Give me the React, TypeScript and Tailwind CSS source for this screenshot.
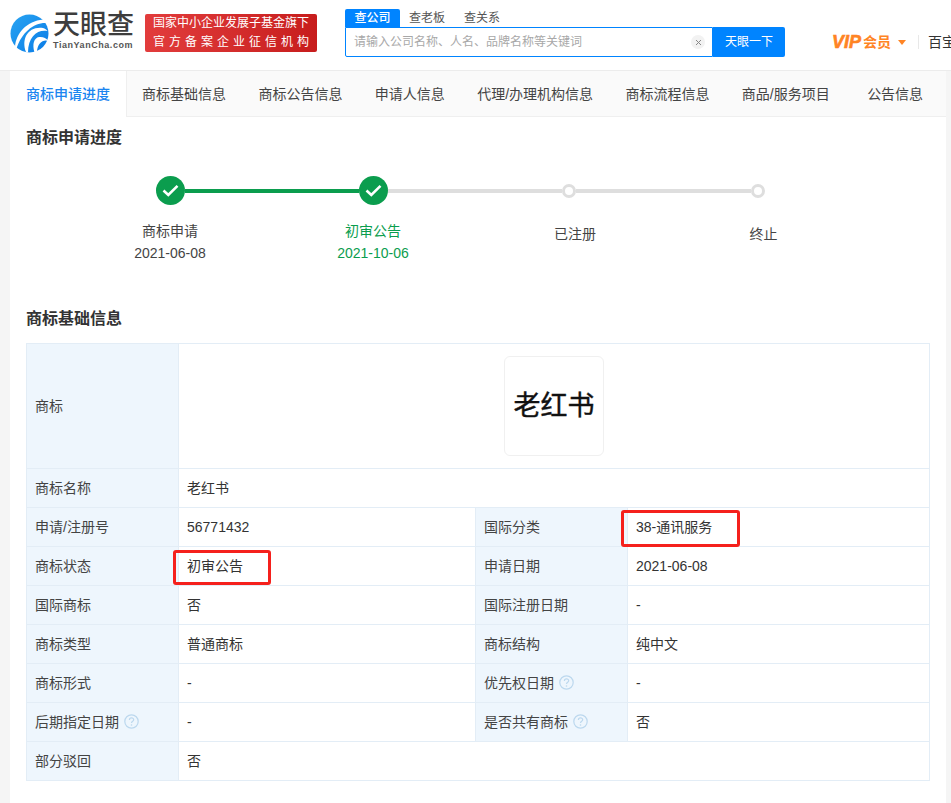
import React from "react";

const FONT = "font-['Liberation_Sans','Noto_Sans_CJK_SC',sans-serif]";

function Logo() {
  return (
    <svg width="39" height="39" viewBox="0 0 39 39" className="shrink-0">
      <defs>
        <linearGradient id="lg" x1="0" y1="0" x2="1" y2="1">
          <stop offset="0" stopColor="#28a4f2" />
          <stop offset="1" stopColor="#0a7be6" />
        </linearGradient>
      </defs>
      <circle cx="19.5" cy="19.5" r="19" fill="url(#lg)" />
      <path d="M5 33 C6 19 17 7 33 5.5 C35 6.5 36 7.5 37 9 C24 8 12 18 6.5 34.5 Z" fill="#fff" />
      <path d="M16 38 C11 25 18 12 33 14 C35 14.5 36.5 15.5 37.5 17 C28 15 18 22 18 38.5 Z" fill="#fff" />
      <path d="M24.5 38.5 C22 30 24 24 29 23 C33 22.5 36 24 38.5 27 C33 25 27.5 29 27 37.8 Z" fill="#fff" />
    </svg>
  );
}

function Check() {
  return (
    <div className="w-[29px] h-[29px] rounded-full bg-[#0b9d4e] flex items-center justify-center shrink-0">
      <svg width="17" height="13" viewBox="0 0 17 13" fill="none">
        <path d="M1.5 6.5 L6.3 11 L15.5 1.8" stroke="#fff" strokeWidth="2.6" />
      </svg>
    </div>
  );
}

function Dot() {
  return <div className="w-[14px] h-[14px] rounded-full bg-white border-[3px] border-[#dedede] shrink-0" />;
}

function Help() {
  return (
    <svg width="15" height="15" viewBox="0 0 15 15" className="inline-block ml-[5px] align-[-2px]" fill="none">
      <circle cx="7.5" cy="7.5" r="6.7" stroke="#bcd8ee" strokeWidth="1.2" />
      <path d="M5.4 5.9 C5.4 3.3 9.7 3.3 9.7 5.8 C9.7 7.4 7.5 7.3 7.5 9.1" stroke="#bcd8ee" strokeWidth="1.2" />
      <circle cx="7.5" cy="11" r="0.8" fill="#bcd8ee" />
    </svg>
  );
}

const tabs = ["商标基础信息", "商标公告信息", "申请人信息", "代理/办理机构信息", "商标流程信息", "商品/服务项目"];

const L = "bg-[#eef6fd] border border-[#e3edf6] pl-2 pr-1 h-[39px] text-[#444] font-normal text-left text-[14px]";
const V = "bg-white border border-[#e3edf6] pl-2 h-[39px] text-[#333] text-[14px]";

export default function App() {
  return (
    <div className={`${FONT} w-[951px] h-[803px] overflow-hidden bg-[#f5f5f5] text-[#333]`}>
      <header className="h-[71px] bg-white border-b border-[#ececec] flex items-start pl-[10px] w-[951px] overflow-hidden">
        <div className="mt-[14px]"><Logo /></div>
        <div className="ml-[4px] mt-[11px] w-[81px] shrink-0">
          <div className="text-[27px] leading-[29px] font-medium text-[#3d3d3d] whitespace-nowrap">天眼查</div>
          <div className="text-[9px] leading-[11px] font-bold text-[#555] tracking-[0.55px] whitespace-nowrap">TianYanCha.com</div>
        </div>
        <div className="ml-[11px] mt-[14px] w-[172px] h-[38px] rounded-[2px] bg-gradient-to-r from-[#e23c3c] to-[#c71c1c] text-white text-[12px] leading-[19px] text-center shrink-0 flex flex-col justify-center">
          <div className="whitespace-nowrap">国家中小企业发展子基金旗下</div>
          <div className="whitespace-nowrap tracking-[4px] pl-[4px]">官方备案企业征信机构</div>
        </div>
        <div className="ml-[28px] mt-[9px] w-[440px] shrink-0">
          <div className="flex h-[18px] text-[12px] leading-[18px] text-[#555]">
            <div className="w-[55px] text-center bg-[#0084ff] text-white font-medium rounded-t-[2px]">查公司</div>
            <div className="ml-[9px] w-[37px]">查老板</div>
            <div className="ml-[18px] w-[37px]">查关系</div>
          </div>
          <div className="flex h-[30px]">
            <div className="w-[368px] border border-[#0084ff] rounded-bl-[2px] flex items-center pl-[8px] pr-[7px]">
              <span className="flex-1 text-[12px] text-[#a8a8a8] whitespace-nowrap">请输入公司名称、人名、品牌名称等关键词</span>
              <span className="w-[14px] h-[14px] rounded-full bg-[#f2f2f2] flex items-center justify-center">
                <svg width="7" height="7" viewBox="0 0 7 7"><path d="M1 1L6 6M6 1L1 6" stroke="#888" strokeWidth="1" /></svg>
              </span>
            </div>
            <div className="w-[72px] bg-[#0084ff] text-white text-[12px] flex items-center justify-center rounded-r-[2px]">天眼一下</div>
          </div>
        </div>
        <div className="ml-[47px] mt-[33px] flex items-center h-[18px] shrink-0 text-[#ff8424]">
          <span className="text-[18px] leading-[18px] font-bold italic [-webkit-text-stroke:0.6px_#ff8424]">VIP</span>
          <span className="ml-[2px] text-[14px] leading-[18px] font-bold">会员</span>
          <span className="ml-[7px] w-0 h-0 border-x-[4px] border-x-transparent border-t-[5px] border-t-[#ff8424]" />
          <span className="ml-[12px] w-px h-[14px] bg-[#e8e8e8]" />
          <span className="ml-[9px] text-[14px] text-[#333] whitespace-nowrap">百宝箱</span>
        </div>
      </header>

      <main className="ml-[10px] w-[936px] h-[732px] bg-white">
        <nav className="h-[45px] flex bg-[#fafafa] border-b border-[#efefef] text-[14px] text-[#444] box-content">
          <div className="w-[117px] bg-white border-r border-[#efefef] text-[#1a85f0] font-medium pl-[16px] leading-[46px] -mb-px whitespace-nowrap">商标申请进度</div>
          <div className="flex gap-[32.4px] pl-[15px] leading-[46px] whitespace-nowrap">
            {tabs.map((t) => <div key={t}>{t}</div>)}
            <div className="ml-[5px]">公告信息</div>
          </div>
        </nav>

        <section className="px-[16px]">
          <h2 className="pt-[10px] text-[16px] leading-[22px] font-bold text-[#333]">商标申请进度</h2>

          <div className="ml-[130px] mt-[27px] flex items-center h-[29px]">
            <Check />
            <div className="w-[174px] h-[4px] bg-[#0b9d4e]" />
            <Check />
            <div className="w-[174px] h-[4px] bg-[#dedede]" />
            <Dot />
            <div className="w-[175px] h-[4px] bg-[#dedede]" />
            <Dot />
          </div>

          <div className="ml-[42px] mt-[15px] flex text-[14px] text-center h-[46px]">
            <div className="w-[204px] leading-[22px] text-[#444]">
              <div>商标申请</div>
              <div>2021-06-08</div>
            </div>
            <div className="w-[202px] leading-[22px] text-[#0b9d4e]">
              <div>初审公告</div>
              <div>2021-10-06</div>
            </div>
            <div className="w-[202px] leading-[22px] pt-[3px] text-[#444]">已注册</div>
            <div className="w-[175px] leading-[22px] pt-[3px] text-[#444]">终止</div>
          </div>

          <h2 className="mt-[42px] text-[16px] leading-[22px] font-bold text-[#333]">商标基础信息</h2>

          <div className="relative mt-[13px]">
            <table className="w-[903px] table-fixed border-collapse">
              <colgroup>
                <col className="w-[152px]" />
                <col className="w-[297px]" />
                <col className="w-[152px]" />
                <col className="w-[302px]" />
              </colgroup>
              <tbody>
                <tr>
                  <th className={`${L} !h-[125px]`}>商标</th>
                  <td colSpan={3} className="border border-[#e3edf6] h-[125px]">
                    <div className="ml-[325px] w-[100px] h-[100px] border border-[#f0f0f0] rounded-[6px] flex items-center justify-center text-[27px] font-normal text-[#111] [-webkit-text-stroke:0.4px_#111]">老红书</div>
                  </td>
                </tr>
                <tr><th className={L}>商标名称</th><td colSpan={3} className={V}>老红书</td></tr>
                <tr><th className={L}>申请/注册号</th><td className={V}>56771432</td><th className={L}>国际分类</th><td className={V}>38-通讯服务</td></tr>
                <tr><th className={L}>商标状态</th><td className={V}>初审公告</td><th className={L}>申请日期</th><td className={V}>2021-06-08</td></tr>
                <tr><th className={L}>国际商标</th><td className={V}>否</td><th className={L}>国际注册日期</th><td className={V}>-</td></tr>
                <tr><th className={L}>商标类型</th><td className={V}>普通商标</td><th className={L}>商标结构</th><td className={V}>纯中文</td></tr>
                <tr><th className={L}>商标形式</th><td className={V}>-</td><th className={L}>优先权日期<Help /></th><td className={V}>-</td></tr>
                <tr><th className={L}>后期指定日期<Help /></th><td className={V}>-</td><th className={L}>是否共有商标<Help /></th><td className={V}>否</td></tr>
                <tr><th className={L}>部分驳回</th><td colSpan={3} className={V}>否</td></tr>
              </tbody>
            </table>
            <div className="absolute left-[147px] top-[207px] w-[98px] h-[35px] border-[3px] border-[#f5201c] rounded-[3px]" />
            <div className="absolute left-[595px] top-[167px] w-[119px] h-[37px] border-[3px] border-[#f5201c] rounded-[3px]" />
          </div>
        </section>
      </main>
    </div>
  );
}
